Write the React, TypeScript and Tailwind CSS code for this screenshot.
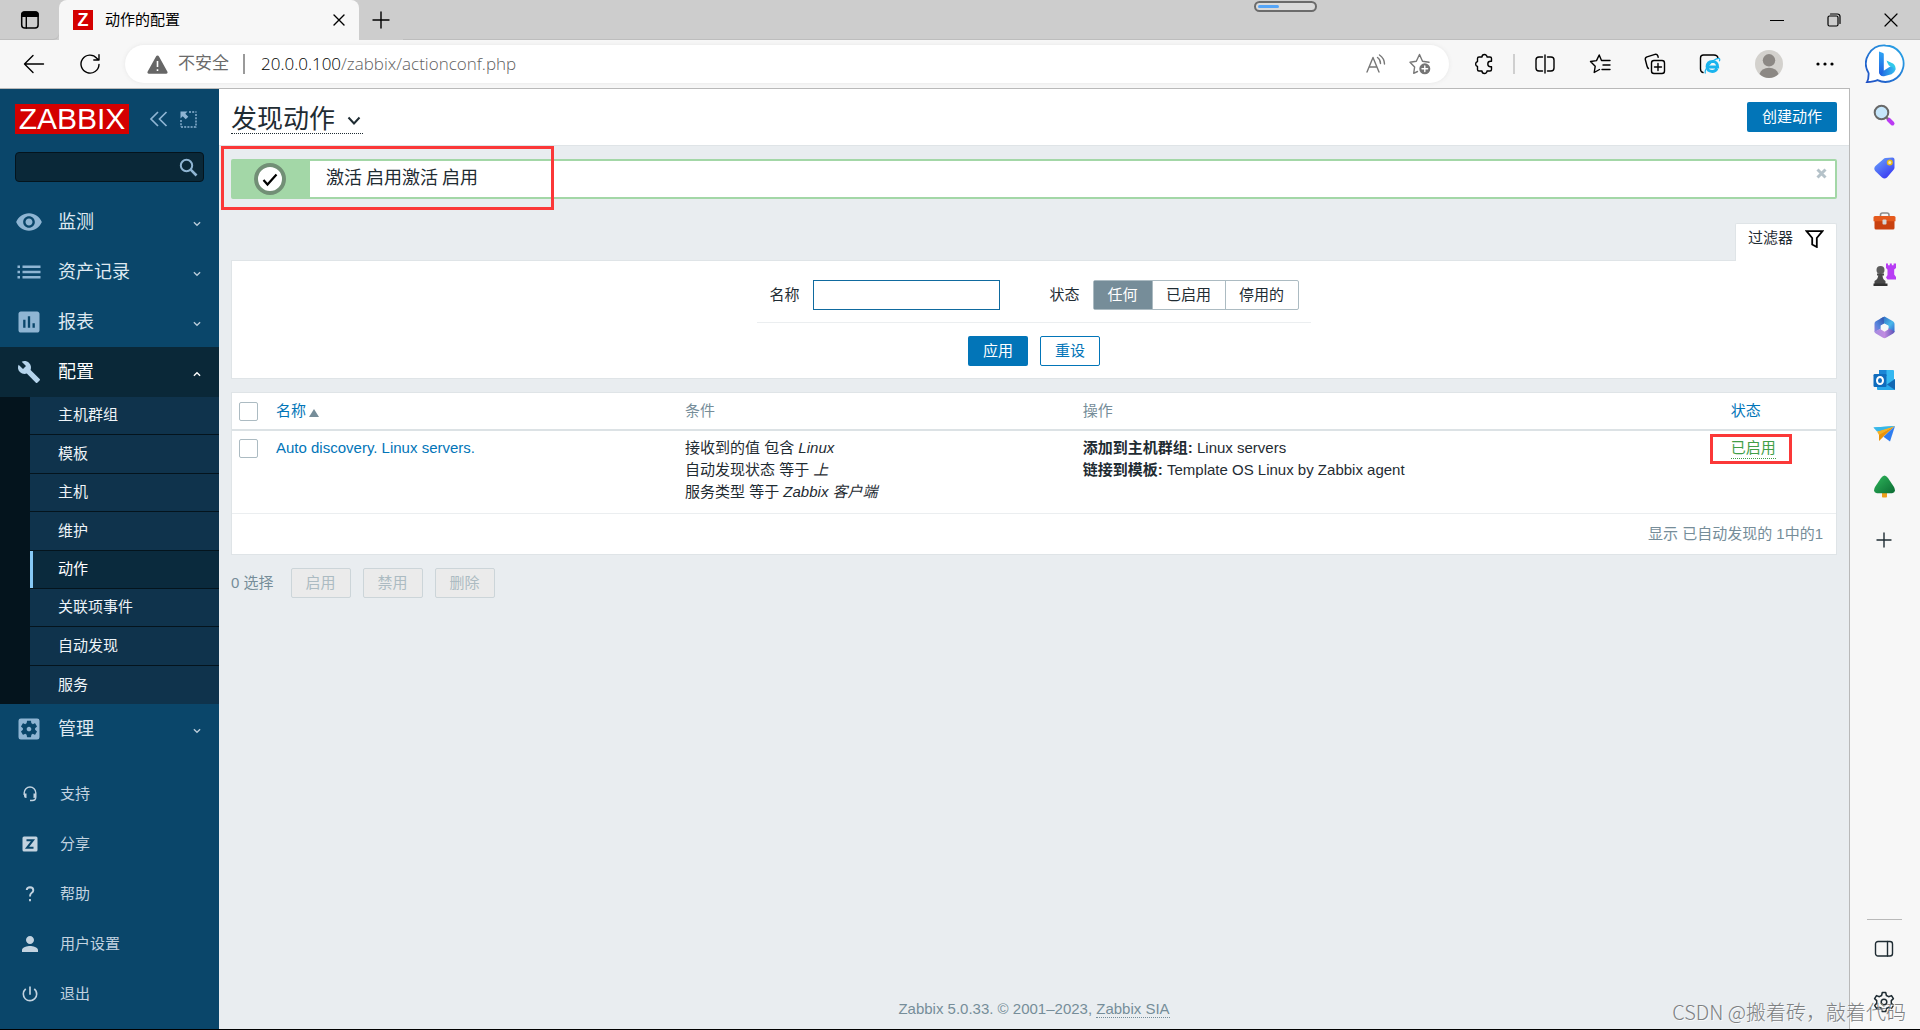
import React, { ReactNode } from 'react';
import {
  MdVisibility,
  MdAssessment,
  MdBuild,
  MdSettingsApplications,
  MdPerson,
  MdPowerSettingsNew,
} from 'react-icons/md';

const stroke = {
  fill: 'none',
  stroke: 'currentColor',
  strokeWidth: 1.4,
  strokeLinecap: 'round' as const,
  strokeLinejoin: 'round' as const,
};

/* ---------- browser chrome ---------- */

function TitleBar() {
  return (
    <div className="flex h-10 items-stretch bg-[#cdcdcd]">
      <button aria-label="标签操作" className="flex w-[59px] items-center justify-center rounded-br-md shadow-[inset_0_-1px_0_#bdbdbd]">
        <svg width="20" height="20" viewBox="0 0 20 20" {...stroke}>
          <rect x="1.7" y="2" width="16.4" height="16" rx="3" strokeWidth="1.5" />
          <path d="M2 4.5q0-2.5 2.5-2.5h11q2.500 0 2.500 2.500V6.200H2z" fill="currentColor" />
          <path d="M6.300 6v12" strokeWidth="1.400" />
        </svg>
      </button>
      <div className="flex w-[300px] items-center rounded-t-lg bg-[#f7f7f7] pr-2 pl-[14px]">
        <div className="flex h-5 w-5 items-center justify-center bg-[#d40000] text-[18px] leading-none font-bold text-white">Z</div>
        <div className="ml-3 flex-1 text-[15px] text-black">动作的配置</div>
        <button aria-label="关闭标签页" className="flex h-6 w-6 items-center justify-center">
          <svg width="12" height="12" viewBox="0 0 12 12" {...stroke}>
            <path d="M1 1l10 10M11 1L1 11" />
          </svg>
        </button>
      </div>
      <button aria-label="新建标签页" className="flex w-11 items-center justify-center">
        <svg width="18" height="18" viewBox="0 0 18 18" {...stroke}>
          <path d="M9 1v16M1 9h16" />
        </svg>
      </button>
      <div className="flex flex-1 items-center justify-end shadow-[inset_0_-1px_0_#bdbdbd]">
        <button aria-label="最小化" className="flex w-[58px] items-center justify-center">
          <svg width="14" height="14" viewBox="0 0 14 14" {...stroke} strokeWidth={1.2}>
            <path d="M0.500 7.500h13" />
          </svg>
        </button>
        <button aria-label="还原" className="flex w-14 items-center justify-center">
          <svg width="14" height="14" viewBox="0 0 14 14" {...stroke} strokeWidth={1.2}>
            <rect x="1" y="3" width="10" height="10" rx="1.500" />
            <path d="M3.500 1h7a2.500 2.500 0 0 1 2.500 2.500v7" />
          </svg>
        </button>
        <button aria-label="关闭" className="flex w-[58px] items-center justify-center">
          <svg width="14" height="14" viewBox="0 0 14 14" {...stroke} strokeWidth={1.2}>
            <path d="M1 1l12 12M13 1L1 13" />
          </svg>
        </button>
      </div>
    </div>
  );
}

function ToolButton({ label, width, children }: { label: string; width: string; children: ReactNode }) {
  return (
    <button aria-label={label} className={`flex h-10 shrink-0 items-center justify-center ${width}`}>
      {children}
    </button>
  );
}

function Toolbar() {
  return (
    <div className="flex h-12 items-center bg-[#f7f7f7] pl-1.5">
      <ToolButton label="后退" width="w-14">
        <svg width="22" height="20" viewBox="0 0 22 20" {...stroke}>
          <path d="M10 1.500L1.500 10l8.500 8.500M1.500 10h19" />
        </svg>
      </ToolButton>
      <ToolButton label="刷新" width="w-14">
        <svg width="22" height="22" viewBox="0 0 22 22" {...stroke}>
          <path d="M20 11.500a9 9 0 1 1-2.200-6.300L19.500 7M20 1.800V7h-5.200" />
        </svg>
      </ToolButton>
      <div className="ml-[7px] flex h-[38px] flex-1 items-center rounded-full bg-white pr-[7px] pl-[22px] shadow-[0_0_4px_#e6e6e6]">
        <svg width="21" height="19" viewBox="0 0 21 19">
          <path d="M10.500 0.500q1 0 1.500 1l8.300 15q0.900 2-1 2.200H1.700q-1.900-0.200-1-2.200L9 1.500q0.500-1 1.500-1z" fill="#666" />
          <path d="M10.500 6v6M10.500 14.200v1.800" stroke="#fff" strokeWidth="1.600" />
        </svg>
        <span className="ml-2.5 text-[17px] text-[#6b6b6b]">不安全</span>
        <span className="mr-4 ml-[14px] h-5 w-0.5 bg-[#9a9a9a]" />
        <div
          role="textbox"
          aria-label="地址栏"
          className="flex-1 font-['Open_Sans','Noto_Sans',sans-serif] text-[17px] font-light text-[#606060]"
        >
          <span className="text-black">20.0.0.100</span>/zabbix/actionconf.php
        </div>
        <button aria-label="朗读此页内容" className="flex w-11 justify-center text-[#777]">
          <svg width="20" height="20" viewBox="0 0 20 20" {...stroke}>
            <path d="M1 18L7 3.500 13 18M3.300 13h7.400" />
            <path d="M11.500 3.500q3 2 3 6M13.500 1q5 3.500 5 9" />
          </svg>
        </button>
        <button aria-label="收藏此页" className="flex w-11 justify-center text-[#777]">
          <svg width="22" height="22" viewBox="0 0 22 22" {...stroke}>
            <path d="M8.500 18.500l-3.800 1.800 0.900-6.200L1 9.300l6.300-1L10.500 1.500l3 6.800 6.500 1" />
            <circle cx="15.800" cy="15.800" r="5.500" fill="#757575" stroke="none" />
            <path d="M15.800 13v5.600M13 15.800h5.600" stroke="#fff" />
          </svg>
        </button>
      </div>
      <div className="w-2" />
      <ToolButton label="扩展" width="w-[54px]">
        <svg width="20" height="22" viewBox="0 0 20 22" {...stroke}>
          <path d="M5 4h3a2.500 2.500 0 0 1 5 0h3q1.500 0 1.500 1.500V8.300h-1a2.600 2.600 0 0 0 0 5.400h1v2.800q0 1.500-1.500 1.500h-3a2.500 2.500 0 0 1-5 0H5q-1.500 0-1.500-1.500v-3a2.600 2.600 0 0 1 0-5V5.500Q3.500 4 5 4z" />
        </svg>
      </ToolButton>
      <div className="flex w-1.5 justify-center">
        <div className="h-5 w-0.5 bg-[#cfcfcf]" />
      </div>
      <ToolButton label="分屏" width="w-[55px]">
        <svg width="20" height="20" viewBox="0 0 20 20" {...stroke}>
          <path d="M10 1v18M7.500 3H4Q1 3 1 6v8q0 3 3 3h3.500M12.500 3H16q3 0 3 3v8q0 3-3 3h-3.500" />
        </svg>
      </ToolButton>
      <ToolButton label="收藏夹" width="w-[55px]">
        <svg width="22" height="20" viewBox="0 0 22 20" {...stroke}>
          <path d="M10.500 15.500l-5.300 3 1-6.200L1.500 7.500l6-0.900L10.200 1l2.300 5.500h8.500M14 11h7M13 15.500h8" />
        </svg>
      </ToolButton>
      <ToolButton label="集锦" width="w-[55px]">
        <svg width="22" height="22" viewBox="0 0 22 22" {...stroke}>
          <rect x="7.500" y="7.500" width="13" height="13" rx="2.500" />
          <path d="M14 10.500v7M10.500 14h7M4.500 15.500Q3.500 15 3 13L1.300 6.500Q1 4.500 3 3.800L11 1.400q2-0.500 2.800 1.300l0.400 1.500" />
        </svg>
      </ToolButton>
      <ToolButton label="IE 模式" width="w-[55px]">
        <svg width="22" height="22" viewBox="0 0 22 22">
          <path d="M4 19.500Q1.500 19 1.500 16V5q0-3 3-3H15q3.500 0 4 3" {...stroke} />
          <path d="M18 15.500q-1.500 3-4.800 3-5-0.200-5.200-5 0.300-5 5.500-5.200 5 0.200 5.200 5.700H9" fill="none" stroke="#1ab4ee" strokeWidth="2.800" />
          <path d="M6.500 20.500q-1.500-2.500 3-8Q15 5.500 20 5.300q1.300 0.600 0.300 3" fill="none" stroke="#1ab4ee" strokeWidth="1.200" />
        </svg>
      </ToolButton>
      <ToolButton label="用户" width="w-[63px]">
        <svg width="28" height="28" viewBox="0 0 28 28">
          <circle cx="14" cy="14" r="14" fill="#d3d1cd" />
          <circle cx="14" cy="10.300" r="6.200" fill="#8c8884" />
          <path d="M4.500 24q2-6 9.500-6.200 7.500 0.200 9.500 6.200Q19.500 28 14 28t-9.500-4z" fill="#8c8884" />
        </svg>
      </ToolButton>
      <ToolButton label="更多" width="w-[50px]">
        <svg width="18" height="4" viewBox="0 0 18 4">
          <circle cx="2" cy="2" r="1.600" />
          <circle cx="9" cy="2" r="1.600" />
          <circle cx="16" cy="2" r="1.600" />
        </svg>
      </ToolButton>
      <ToolButton label="Bing" width="w-[70px]">
        <svg width="40" height="40" viewBox="0 0 40 40">
          <defs>
            <linearGradient id="bubble" x1="1" y1="0" x2="0" y2="1">
              <stop offset="0" stopColor="#2aa9e8" />
              <stop offset="1" stopColor="#1f4fc4" />
            </linearGradient>
            <linearGradient id="bing" x1="0" y1="0" x2="1" y2="0">
              <stop offset="0" stopColor="#1e5fe0" />
              <stop offset="1" stopColor="#35c0f0" />
            </linearGradient>
            <linearGradient id="stem" x1="0" y1="0" x2="0" y2="1">
              <stop offset="0" stopColor="#2fa5f5" />
              <stop offset="1" stopColor="#1e5fe0" />
            </linearGradient>
          </defs>
          <path d="M20.500 1.500a18.200 18.200 0 1 1-8 34.600q-3.500 1.600-10.500 2 1.800-3 1.600-9A18.200 18.200 0 0 1 20.500 1.500z" fill="#fff" stroke="url(#bubble)" strokeWidth="1.800" />
          <path d="M19 26.500l7-4.500q4 0.500 4.500 3.500-0.500 2.700-4 4.700L20 32q-3 1-5-1.200l-1-3z" fill="url(#bing)" />
          <path d="M14 7.500l4 1.500q0.800 0.400 0.800 1.400v15.800L16.500 31Q14 30.500 14 27.500z" fill="url(#stem)" />
          <path d="M21.500 16.500l6.500 3q3 2.500 2.500 6.200-1-2.200-4-3l-2.600-1.200q-1.400-2-2.400-5z" fill="#30c9ea" />
        </svg>
      </ToolButton>
    </div>
  );
}

const railIcons: { label: string; art: ReactNode }[] = [
  {
    label: '搜索',
    art: (
      <>
        <path d="M15.500 15.500l4 4" stroke="#bb3bf3" strokeWidth="4" strokeLinecap="round" />
        <path d="M13 13l2 2" stroke="#777" strokeWidth="2" />
        <circle cx="8.500" cy="8.500" r="6.800" fill="#c5e6fb" stroke="#686868" strokeWidth="2" />
      </>
    ),
  },
  {
    label: '购物',
    art: (
      <>
        <path d="M3 8.500L10.500 2q0.800-0.800 2-0.900l7-0.600q2 0 2 2v8q0 1.300-0.900 2.200L14 20.500q-2.500 2-5 0L2.200 14q-2.200-2.800 0.800-5.500z" fill="url(#tag)" />
        <circle cx="16.800" cy="5.500" r="2.300" fill="#f2e9b8" stroke="#e9ba14" strokeWidth="1.500" />
      </>
    ),
  },
  {
    label: '工具',
    art: (
      <>
        <path d="M7.500 7V5q0-2 2-2h4.500q2 0 2 2v2" fill="none" stroke="#8c8c8c" strokeWidth="1.600" />
        <rect x="1.500" y="9" width="20" height="10.500" rx="1.500" fill="#c9410f" />
        <path d="M0.500 7.500Q0.500 6 2 6h19q1.500 0 1.500 1.500v3.800H0.500z" fill="#e55a1d" />
        <rect x="9.500" y="9.500" width="4" height="5" rx="1" fill="#d5d5d5" />
      </>
    ),
  },
  {
    label: '游戏',
    art: (
      <>
        <path d="M13 0.500h2v1.700h1.800V0.500h2v1.700h1.800V0.500H23v4.500l-1.800 1.500v5l1.800 2.500v2.500h-8.500L13 14.500l1.500-2.500V6.500L13 5z" fill="#b83df4" />
        <circle cx="7.500" cy="7" r="4" fill="#5d5d5d" />
        <path d="M4 10.500h7v2H9.500q0.200 4 3 5.500v4.500h-11V18q3.300-1.500 3.800-5.500H4z" fill="#4a4a4a" />
        <path d="M0.500 20.500h14v2.500H0.500z" fill="#333" />
      </>
    ),
  },
  {
    label: 'Microsoft 365',
    art: (
      <>
        <path d="M11.500 0.500l8.500 4.700q1.500 1 1.500 2.500v8.500l-6-3V9.800L9 6.300 7.500 2.500z" fill="url(#m1)" />
        <path d="M10.500 1L2.800 5.200Q1.500 6 1.500 7.700v8.500l6.200-3.400V9.500l3.500-2z" fill="url(#m2)" />
        <path d="M1.500 15.500q0 1.200 1.300 2l7.200 4.300q1.500 0.800 3 0l7.200-4.300q1.300-0.800 1.300-2.200l-6-3-4 2.700-3.800-2.300z" fill="url(#m3)" />
        <path d="M11.500 7.800l3.700 2v3.800l-3.700 2.200-3.600-2.200V9.800z" fill="#f7f7f7" />
      </>
    ),
  },
  {
    label: 'Outlook',
    art: (
      <>
        <rect x="6" y="1" width="15" height="17" rx="1" fill="#35b8f1" />
        <path d="M6 1h7.500v6H6z" fill="#1a86d6" />
        <path d="M4 12l9 4 9-6v10q0 1-1 1H5q-1 0-1-1z" fill="#28a8ea" />
        <path d="M22 10v11l-8-5.500z" fill="#1268b3" />
        <rect x="0.500" y="5" width="13" height="13" rx="1.200" fill="#0f6cbd" />
        <ellipse cx="7" cy="11.500" rx="3" ry="3.500" fill="none" stroke="#fff" strokeWidth="2" />
      </>
    ),
  },
  {
    label: 'Drop',
    art: (
      <>
        <path d="M0.500 5.500L22 4 8 11z" fill="#37b7e8" />
        <path d="M22 4L6 12v7l4.500-4.500z" fill="#e8930c" />
        <path d="M22 4l-5 15.500-6.500-4.700z" fill="#2f7df0" />
        <path d="M22 4L4 9.500 6 13z" fill="#f5b025" />
        <path d="M0.500 5.500L22 4 4 9.500z" fill="#37b7e8" />
      </>
    ),
  },
  {
    label: 'E-tree',
    art: (
      <>
        <rect x="9" y="16" width="5" height="6.500" rx="0.800" fill="#f0a01c" />
        <path d="M11.500 0.500q1.800 0 3.500 2.500l6 9q2.500 5.200-2 6.200h-15Q-0.500 17.200 2 12L8 3q1.700-2.500 3.500-2.500z" fill="url(#tree)" />
      </>
    ),
  },
];

function EdgeRail() {
  return (
    <aside className="flex w-[71px] shrink-0 flex-col items-center border-l border-[#b9b9b9] bg-[#f7f7f7] pt-px pr-0.5 pb-px">
      <svg width="0" height="0" className="absolute">
        <defs>
          <linearGradient id="tag" x1="0" y1="0" x2="0.700" y2="1">
            <stop offset="0" stopColor="#6aa8fb" />
            <stop offset="1" stopColor="#3a39f2" />
          </linearGradient>
          <linearGradient id="m1" x1="0" y1="0" x2="1" y2="1">
            <stop offset="0" stopColor="#2b5fbd" />
            <stop offset="0.600" stopColor="#4ab8ea" />
            <stop offset="1" stopColor="#2f62d0" />
          </linearGradient>
          <linearGradient id="m2" x1="1" y1="0" x2="0" y2="1">
            <stop offset="0" stopColor="#2d4fa8" />
            <stop offset="0.600" stopColor="#5585dc" />
            <stop offset="1" stopColor="#9a80dc" />
          </linearGradient>
          <linearGradient id="m3" x1="0" y1="0" x2="1" y2="0">
            <stop offset="0" stopColor="#a58be0" />
            <stop offset="0.500" stopColor="#c18be0" />
            <stop offset="1" stopColor="#5a53b8" />
          </linearGradient>
          <linearGradient id="tree" x1="0" y1="0" x2="1" y2="1">
            <stop offset="0" stopColor="#2fb85c" />
            <stop offset="1" stopColor="#0c6b33" />
          </linearGradient>
        </defs>
      </svg>
      {railIcons.map((icon) => (
        <button key={icon.label} aria-label={icon.label} className="flex h-[53px] w-full items-center justify-center">
          <svg width="23" height="23" viewBox="0 0 23 23">{icon.art}</svg>
        </button>
      ))}
      <button aria-label="自定义" className="flex h-[53px] w-full items-center justify-center">
        <svg width="16" height="16" viewBox="0 0 16 16" {...stroke}>
          <path d="M8 1v14M1 8h14" />
        </svg>
      </button>
      <div className="mt-auto w-[35px] border-t border-[#b9b9b9]" />
      <button aria-label="隐藏边栏" className="mt-0.5 flex h-[53px] w-full items-center justify-center">
        <svg width="20" height="18" viewBox="0 0 20 18" {...stroke}>
          <rect x="1.500" y="1.500" width="17" height="14.500" rx="2.500" />
          <path d="M13.500 1.500v14.500" />
        </svg>
      </button>
      <button aria-label="设置" className="flex h-[53px] w-full items-center justify-center">
        <svg width="22" height="22" viewBox="0 0 22 22" {...stroke} strokeWidth={1.500}>
          <path d="M9.300 1.500h3.400l0.700 3 2.200 1.200 2.900-1.100 1.900 3-2.100 2v2.800l2.100 2-1.900 3-2.900-1.100-2.200 1.200-0.700 3H9.300l-0.700-3-2.200-1.200-2.900 1.100-1.900-3 2.100-2V9.600l-2.100-2 1.900-3 2.900 1.100 2.200-1.200z" />
          <circle cx="11" cy="11" r="2.800" />
        </svg>
      </button>
    </aside>
  );
}

/* ---------- Zabbix ---------- */

function Chevron({ up = false }: { up?: boolean }) {
  return (
    <svg className="mt-1" width="8" height="6" viewBox="0 0 9 6" fill="none" stroke={up ? '#fff' : '#b9cbd9'} strokeWidth="1.500">
      <path d={up ? 'M1 5l3.500-3.500L8 5' : 'M1 1l3.500 3.500L8 1'} />
    </svg>
  );
}

const ListIcon = () => (
  <svg width="28" height="28" viewBox="0 0 28 28" fill="currentColor">
    <path d="M2.500 7.500h2.500v2.500H2.500zM2.500 12.700h2.500v2.500H2.500zM2.500 18h2.500v2.500H2.500zM7.500 7.500h18v2.500h-18zM7.500 12.700h18v2.500h-18zM7.500 18h18v2.500h-18z" />
  </svg>
);

function NavItem({ icon, label, active = false }: { icon: ReactNode; label: string; active?: boolean }) {
  return (
    <a
      href="#"
      className={`flex h-[50px] items-center pr-[18px] pl-[15px] text-[18px] ${
        active ? 'bg-[#0a2838] text-white' : 'text-[#dfe9f1]'
      }`}
    >
      <span className={`w-7 ${active ? 'text-[#b5d4ec]' : 'text-[#8fb5d3]'}`}>{icon}</span>
      <span className="ml-[15px] flex-1">{label}</span>
      <Chevron up={active} />
    </a>
  );
}

const subItems = ['主机群组', '模板', '主机', '维护', '动作', '关联项事件', '自动发现', '服务'];

const footItems: { label: string; icon: ReactNode }[] = [
  {
    label: '支持',
    icon: (
      <svg width="16" height="16" viewBox="0 0 16 16" fill="none" stroke="currentColor" strokeWidth="1.400">
        <path d="M2.200 9V6.800a5.800 5.800 0 0 1 11.600 0V11q0 3.500-3.500 3.500H8" />
        <path d="M2 7.500h2.500v4.500H4Q2 12 2 10zM14 7.500h-2.500v4.500h0.500q2 0 2-2z" fill="currentColor" stroke="none" />
      </svg>
    ),
  },
  {
    label: '分享',
    icon: (
      <svg width="16" height="16" viewBox="0 0 16 16">
        <rect width="15" height="15" x="0.500" y="0.500" rx="1.500" fill="currentColor" />
        <path d="M4.500 4.200h6.500L5 11.800h6.500" fill="none" stroke="#0a466a" strokeWidth="2" />
      </svg>
    ),
  },
  {
    label: '帮助',
    icon: (
      <svg width="16" height="16" viewBox="0 0 16 16" fill="none" stroke="currentColor" strokeWidth="1.900">
        <path d="M4.700 4q0.300-2.700 3.300-2.800 3.300 0.200 3.300 3 0 1.600-1.800 2.800Q8 8 8 10.500M8 13v2.300" />
      </svg>
    ),
  },
  { label: '用户设置', icon: <MdPerson className="-m-1 size-6" /> },
  { label: '退出', icon: <MdPowerSettingsNew className="-m-0.5 size-5" /> },
];

function Sidebar() {
  return (
    <nav className="flex w-[219px] shrink-0 flex-col border-t border-[#b9b9b9] bg-[#0a466a]">
      <div className="mt-[15px] flex h-[30px] items-center pl-[15px] text-[#8fb5d3]">
        <a href="#" className="flex h-[30px] w-[114px] items-center justify-center bg-[#d40000] text-[30px] leading-none text-white">
          ZABBIX
        </a>
        <button aria-label="收起侧栏" className="ml-5">
          <svg width="19" height="16" viewBox="0 0 19 16" fill="none" stroke="currentColor" strokeWidth="1.700">
            <path d="M9 1L2 8l7 7M17.500 1l-7 7 7 7" />
          </svg>
        </button>
        <button aria-label="隐藏侧栏" className="ml-3">
          <svg width="17" height="17" viewBox="0 0 17 17" fill="none" stroke="currentColor">
            <path d="M9 1h7.500M16 3v13.500M1 16h15M1 9v7" strokeWidth="1.400" strokeDasharray="2 1.200" />
            <path d="M0.500 0.500h7L5.300 2.700l3 3-2.600 2.600-3-3L0.500 7.500z" fill="currentColor" stroke="none" />
          </svg>
        </button>
      </div>
      <div className="mt-[18px] mr-[15px] ml-[15px] flex h-[30px] items-center rounded-sm border border-[#04141d] bg-[#0a2838] pr-[5px]">
        <input type="search" aria-label="搜索" className="h-full min-w-0 flex-1 bg-transparent px-2 text-[15px] text-white outline-none" />
        <svg width="19" height="19" viewBox="0 0 19 19" fill="none" stroke="#8fb5d3">
          <circle cx="7.500" cy="7.500" r="5.700" strokeWidth="2" />
          <path d="M11.700 11.700L17.500 17.500" strokeWidth="2.600" />
        </svg>
      </div>
      <div className="mt-[15px]">
        <NavItem icon={<MdVisibility className="size-7" />} label="监测" />
        <NavItem icon={<ListIcon />} label="资产记录" />
        <NavItem icon={<MdAssessment className="size-7" />} label="报表" />
        <NavItem icon={<MdBuild className="ml-0.5 size-6" />} label="配置" active />
        <ul className="grid h-[307px] auto-rows-fr bg-[#04141d] pl-[30px]">
          {subItems.map((item) => (
            <li key={item} className="border-b border-[#04141d] last:border-b-0">
              <a
                href="#"
                className={`flex h-full items-center text-[15px] ${
                  item === '动作'
                    ? 'border-l-[3px] border-[#86c9f6] bg-[#0a2a3d] pl-[25px] text-white'
                    : 'bg-[#0f334c] pl-7 text-[#eef4f8]'
                }`}
              >
                {item}
              </a>
            </li>
          ))}
        </ul>
        <NavItem icon={<MdSettingsApplications className="size-7" />} label="管理" />
      </div>
      <div className="mt-auto mb-2.5">
        {footItems.map((item) => (
          <a key={item.label} href="#" className="flex h-[50px] items-center pl-[22px] text-[15px] text-[#c3d3e0]">
            <span className="w-4">{item.icon}</span>
            <span className="ml-[22px]">{item.label}</span>
          </a>
        ))}
      </div>
    </nav>
  );
}

function PageHeader() {
  return (
    <header className="flex h-[57px] items-center justify-between border-b border-[#dfe4e7] bg-white px-3">
      <h1>
        <button className="flex items-center border-b border-dotted border-[#1f2c33] pt-[5px] pr-0.5 text-[26px] leading-[28px]">
          发现动作
          <svg className="mt-1 ml-3" width="14" height="10" viewBox="0 0 14 10" fill="none" stroke="currentColor" strokeWidth="2">
            <path d="M1.500 1.500L7 7.500l5.500-6" />
          </svg>
        </button>
      </h1>
      <button className="h-[30px] w-[90px] rounded-xs bg-[#0275b8] text-[15px] text-white">创建动作</button>
    </header>
  );
}

function Message() {
  return (
    <div className="relative mx-3 mt-[13px] flex h-10 rounded-xs border-2 border-[#a3d7a7] bg-white">
      <div className="flex w-[77px] items-center justify-center bg-[#a3d7a7] pr-1">
        <svg width="32" height="32" viewBox="0 0 32 32">
          <circle cx="16" cy="16" r="14" fill="#fff" stroke="#728f76" strokeWidth="4" />
          <path d="M9.500 17l4 4.500 9-10" fill="none" stroke="#000" strokeWidth="2.200" />
        </svg>
      </div>
      <p className="flex-1 pl-4 font-['Noto_Sans_CJK_SC',sans-serif] text-[18px] leading-[30px]">激活 启用激活 启用</p>
      <button aria-label="关闭" className="mr-1.5 flex h-6 w-4 items-center justify-center">
        <svg width="11" height="11" viewBox="0 0 11 11" stroke="#b5c2c9" strokeWidth="3">
          <path d="M1.500 1.500l8 8M9.500 1.500l-8 8" />
        </svg>
      </button>
      <div className="pointer-events-none absolute -top-[15px] -left-3 h-16 w-[333px] border-3 border-[#fb3838]" />
    </div>
  );
}

function Filter() {
  const states = [
    { label: '任何', width: 'w-[58px]' },
    { label: '已启用', width: 'w-[73px]' },
    { label: '停用的', width: 'w-[73px]' },
  ];
  return (
    <section className="mx-3 mt-6">
      <div className="flex justify-end">
        <a href="#" className="z-10 -mb-px flex h-[38px] items-center rounded-t-xs border border-b-0 border-[#dfe4e7] bg-white pr-3 pb-2 pl-3 text-[15px]">
          过滤器
          <svg className="ml-3" width="19" height="18" viewBox="0 0 19 18" fill="none" stroke="#000" strokeWidth="1.800">
            <path d="M1.500 1.200h16L11.800 8v9L7.200 14.500V8z" />
          </svg>
        </a>
      </div>
      <form className="flex h-[119px] flex-col items-center border border-[#dfe4e7] bg-white pt-[19px]">
        <div className="flex h-[43px] items-start border-b border-[#ebeef0] px-3">
          <label htmlFor="filter-name" className="leading-[30px]">名称</label>
          <input id="filter-name" type="text" className="ml-[13px] h-[30px] w-[187px] border border-[#0f6a9f] bg-white px-1.5 outline-none" />
          <fieldset className="ml-[50px] flex">
            <legend className="float-left leading-[30px]">状态</legend>
            <div className="ml-[13px] flex h-[30px] rounded-xs border border-[#acbbc2]">
              {states.map((s, i) => (
                <label
                  key={s.label}
                  className={`flex cursor-pointer items-center justify-center border-l border-[#acbbc2] first:border-l-0 has-checked:bg-[#768d99] has-checked:text-white ${s.width}`}
                >
                  <input type="radio" name="state" defaultChecked={i === 0} className="sr-only" />
                  {s.label}
                </label>
              ))}
            </div>
          </fieldset>
        </div>
        <div className="mt-[13px] flex gap-3">
          <button type="button" className="h-[30px] w-[60px] rounded-xs bg-[#0275b8] text-white">应用</button>
          <button type="button" className="h-[30px] w-[60px] rounded-xs border border-[#0275b8] bg-white text-[#0275b8]">重设</button>
        </div>
      </form>
    </section>
  );
}

function Tick({ label }: { label: string }) {
  return (
    <input
      type="checkbox"
      aria-label={label}
      className="block size-[19px] appearance-none rounded-xs border border-[#acbbc2] bg-white"
    />
  );
}

function ActionTable() {
  return (
    <div className="mx-3 mt-[13px] border border-[#dfe4e7] bg-white">
      <table className="w-full table-fixed text-left">
        <colgroup>
          <col className="w-11" />
          <col className="w-[25.5%]" />
          <col className="w-[24.8%]" />
          <col className="w-[40.4%]" />
          <col />
        </colgroup>
        <thead>
          <tr className="h-[37px] border-b-2 border-[#dce2e5] text-[#768d99]">
            <th className="pl-[7px] font-normal"><Tick label="全选" /></th>
            <th className="font-normal">
              <a href="#" className="inline-flex items-center text-[#0275b8]">
                名称
                <svg className="mt-1 ml-[3px]" width="10" height="8" viewBox="0 0 10 8"><path d="M5 0l5 8H0z" fill="#768d99" /></svg>
              </a>
            </th>
            <th className="font-normal">条件</th>
            <th className="font-normal">操作</th>
            <th className="font-normal"><a href="#" className="text-[#0275b8]">状态</a></th>
          </tr>
        </thead>
        <tbody>
          <tr className="h-[83px] border-b border-[#ebeef0] align-top leading-[22px]">
            <td className="pt-2 pl-[7px]"><Tick label="Auto discovery. Linux servers." /></td>
            <td className="pt-1.5"><a href="#" className="text-[#0275b8]">Auto discovery. Linux servers.</a></td>
            <td className="pt-1.5">
              接收到的值 包含 <em>Linux</em><br />
              自动发现状态 等于 <em>上</em><br />
              服务类型 等于 <em>Zabbix 客户端</em>
            </td>
            <td className="pt-1.5">
              <b>添加到主机群组:</b> Linux servers<br />
              <b>链接到模板:</b> Template OS Linux by Zabbix agent
            </td>
            <td className="pt-1.5">
              <span className="relative inline-block">
                <a href="#" className="inline-block border-b border-dotted border-[#429e47] leading-5 text-[#429e47]">已启用</a>
                <span className="pointer-events-none absolute -top-[3px] -left-[21px] h-[30px] w-[82px] border-3 border-[#fb3838]" />
              </span>
            </td>
          </tr>
        </tbody>
        <tfoot>
          <tr className="h-[41px] text-[#768d99]">
            <td colSpan={5} className="pt-px pr-[13px] text-right">显示 已自动发现的 1中的1</td>
          </tr>
        </tfoot>
      </table>
    </div>
  );
}

function BulkActions() {
  return (
    <div className="mx-3 mt-[13px] flex items-center gap-3 text-[#768d99]">
      <span className="mr-[5px]">0 选择</span>
      {['启用', '禁用', '删除'].map((t) => (
        <button key={t} disabled className="h-[30px] w-[60px] rounded-xs border border-[#ccd5d9] bg-[#ebebeb] text-[#acbbc2]">
          {t}
        </button>
      ))}
    </div>
  );
}

export default function App() {
  return (
    <div className="relative flex min-h-screen flex-col overflow-hidden border-b border-black font-['Liberation_Sans','Noto_Sans_CJK_SC',sans-serif] text-[15px] text-[#1f2c33]">
      <div className="text-black">
        <TitleBar />
        <Toolbar />
      </div>
      <div className="absolute top-px left-[1254px] h-[11px] w-[63px] rounded-full border-2 border-[#6b6b6b] bg-[#dadada] p-0.5">
        <div className="h-full w-[21px] rounded-full bg-[#55a5f8]" />
      </div>
      <div className="flex flex-1">
        <Sidebar />
        <main className="flex min-w-0 flex-1 flex-col border-t border-[#b9b9b9] bg-[#e9edf0]">
          <PageHeader />
          <Message />
          <Filter />
          <ActionTable />
          <BulkActions />
          <footer className="mt-auto pb-2.5 text-center leading-5 text-[#768d99]">
            Zabbix 5.0.33. © 2001–2023,{' '}
            <a href="#" className="border-b border-dotted border-[#768d99]">Zabbix SIA</a>
          </footer>
        </main>
        <EdgeRail />
      </div>
      <div className="pointer-events-none absolute right-3.5 bottom-[3px] font-['Noto_Sans_CJK_SC',sans-serif] text-[20px] leading-7 font-light text-[#7d8082] [text-shadow:1px_1px_0_#ffffffaa]">
        CSDN @搬着砖，敲着代码
      </div>
    </div>
  );
}
